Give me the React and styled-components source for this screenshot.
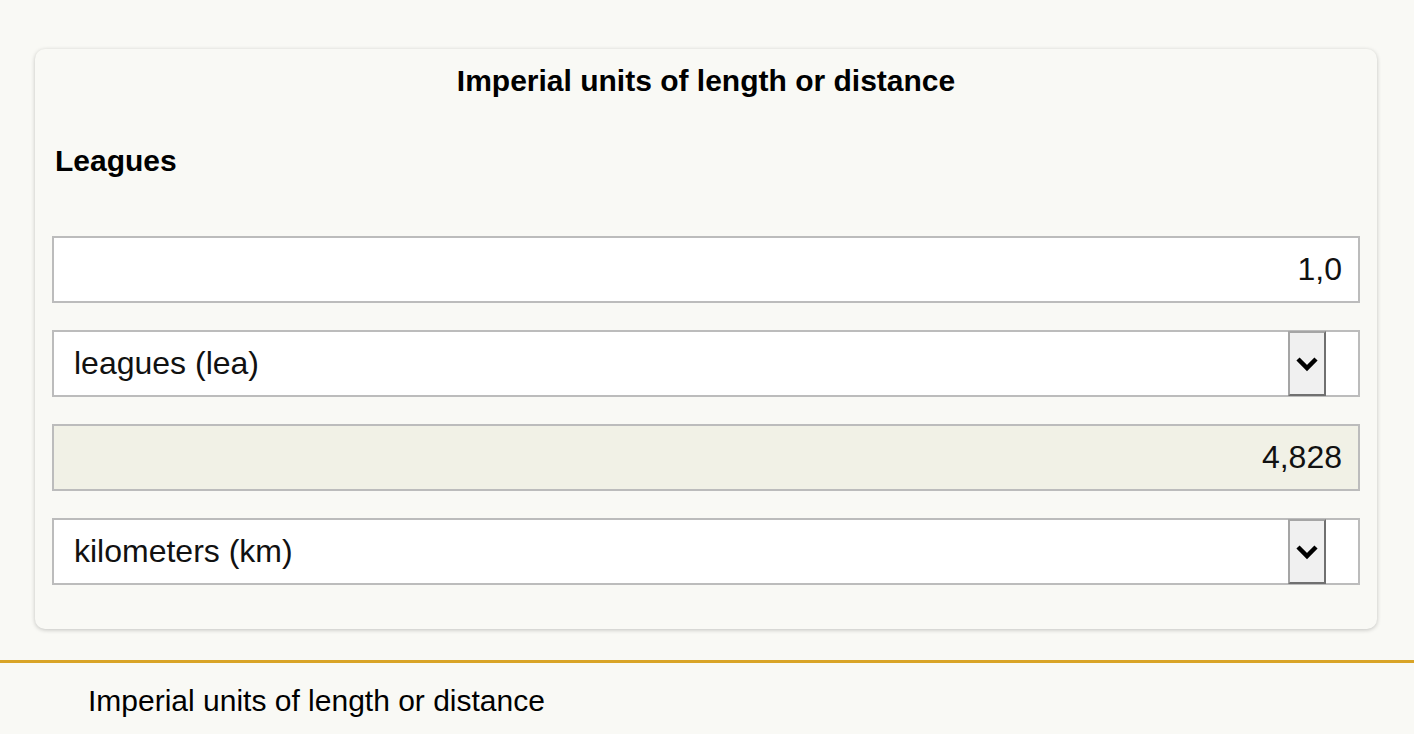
import React from 'react';
import styled, { createGlobalStyle } from 'styled-components';

const GlobalStyle = createGlobalStyle`
  html, body {
    margin: 0;
    padding: 0;
    background: #f9f9f5;
    font-family: "Liberation Sans", Arial, sans-serif;
    color: #000;
  }
`;

const Page = styled.div`
  padding: 49px 37px 0 35px;
`;

const Card = styled.section`
  background: #f9f9f5;
  border-radius: 10px;
  box-shadow: 0 1px 4px rgba(0, 0, 0, 0.22);
  padding: 15px 17px 44px;
  display: flex;
  flex-direction: column;
`;

const Title = styled.h1`
  margin: 0;
  font-size: 30px;
  line-height: 34px;
  font-weight: 700;
  text-align: center;
`;

const UnitName = styled.h2`
  margin: 46px 0 58px 3px;
  font-size: 30px;
  line-height: 34px;
  font-weight: 700;
`;

const Fields = styled.div`
  display: flex;
  flex-direction: column;
  gap: 27px;
`;

const Field = styled.div`
  box-sizing: border-box;
  height: 67px;
  border: 2px solid #bcbcbc;
  background: ${(p) => (p.$result ? '#f1f1e6' : '#fff')};
  display: flex;
  align-items: center;
  justify-content: flex-end;
  padding: 0 16px;
  font-size: 32px;
  color: #111;
`;

const SelectBox = styled.div`
  box-sizing: border-box;
  height: 67px;
  border: 2px solid #bcbcbc;
  background: #fff;
  display: flex;
  align-items: stretch;
  padding: 0 32px 0 20px;
  font-size: 32px;
  color: #111;
`;

const SelectLabel = styled.span`
  flex: 1;
  display: flex;
  align-items: center;
`;

const ArrowButton = styled.span`
  box-sizing: border-box;
  width: 38px;
  margin: -1px 0;
  background: #f0f0f0;
  border-style: solid;
  border-width: 2px;
  border-color: #a5a5a5 #707070 #707070 #a5a5a5;
  display: flex;
  align-items: center;
  justify-content: center;
`;

const Footer = styled.footer`
  margin-top: 31px;
  border-top: 3px solid #d9a427;
  padding: 21px 0 0 88px;
  font-size: 30px;
  line-height: 34px;
`;

const Chevron = () => (
  <svg width="24" height="17" viewBox="0 0 24 17">
    <path d="M3 4 L12 13 L21 4" fill="none" stroke="#000" strokeWidth="4.5" />
  </svg>
);

const Select = ({ label }) => (
  <SelectBox>
    <SelectLabel>{label}</SelectLabel>
    <ArrowButton>
      <Chevron />
    </ArrowButton>
  </SelectBox>
);

export default function App() {
  return (
    <>
      <GlobalStyle />
      <Page>
        <Card>
          <Title>Imperial units of length or distance</Title>
          <UnitName>Leagues</UnitName>
          <Fields>
            <Field>1,0</Field>
            <Select label="leagues (lea)" />
            <Field $result>4,828</Field>
            <Select label="kilometers (km)" />
          </Fields>
        </Card>
      </Page>
      <Footer>Imperial units of length or distance</Footer>
    </>
  );
}
